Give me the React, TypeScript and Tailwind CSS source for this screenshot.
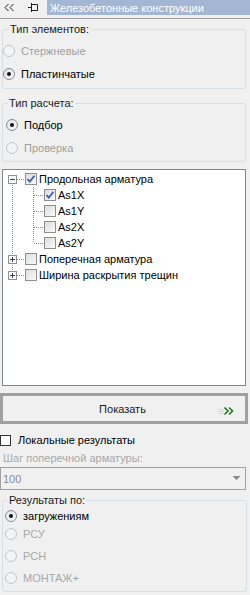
import React from 'react';

type RadioProps = {
  checked?: boolean
  disabled?: boolean
};

const Radio: React.FC<RadioProps> = ({ checked, disabled }: RadioProps) => (
  <span
    className={
      disabled
        ? 'flex h-[12px] w-[12px] shrink-0 items-center justify-center rounded-full border border-[#c4c4c4] bg-[#f4f4f4]'
        : 'flex h-[12px] w-[12px] shrink-0 items-center justify-center rounded-full border border-[#8a8a8a] bg-gradient-to-br from-[#e2e2e2] to-[#fbfbfb]'
    }
  >
    {checked && <span className="h-[4px] w-[4px] rounded-full bg-[#141414]" />}
  </span>
);

type CheckProps = {
  checked?: boolean
};

const TreeCheck: React.FC<CheckProps> = ({ checked }: CheckProps) => (
  <span className="flex h-[12px] w-[12px] shrink-0 items-center justify-center border border-[#8e8f8f] bg-gradient-to-br from-[#dcdcdc] to-[#fafafa]">
    {checked && (
      <svg width="10" height="10" viewBox="0 0 10 10">
        <path d="M1.5 5.2 L3.8 7.6 L8.5 1.8" fill="none" stroke="#3d5fb0" strokeWidth="1.8" />
      </svg>
    )}
  </span>
);

const Expander: React.FC<{ open?: boolean }> = ({ open }) => (
  <svg width="9" height="9" viewBox="0 0 9 9" className="shrink-0">
    <rect x="0.5" y="0.5" width="8" height="8" fill="#ffffff" stroke="#919191" />
    <path d="M2 4.5 H7" stroke="#1f3f7a" />
    {!open && <path d="M4.5 2 V7" stroke="#1f3f7a" />}
  </svg>
);

const App: React.FC = () => {
  return (
    <div className="flex h-[595px] w-[250px] flex-col overflow-hidden bg-[#f0f0f0] font-['Liberation_Sans',Arial,sans-serif] text-[11px] leading-[14px] text-black">
      {/* header */}
      <div className="flex h-[15px] items-center">
        <svg width="47" height="15" viewBox="0 0 47 15" className="shrink-0">
          <path d="M8.5 4 L5 7.5 L8.5 11 M13.5 4 L10 7.5 L13.5 11" fill="none" stroke="#202020" />
          <path d="M28 7.5 H31.5 M31.5 3 V12 M31.5 4.5 H37.5 V10.5 H31.5" fill="none" stroke="#202020" />
        </svg>
        <div className="flex h-[15px] flex-1 items-center bg-[#a3b6d3] pl-[3px] text-white">Железобетонные конструкции</div>
      </div>
      <div className="mt-[3px] h-px bg-[#a0a0a0]" />

      {/* тип элементов */}
      <fieldset className="ml-[2px] mt-[3px] h-[67px] w-[244px] rounded-[3px] border border-[#d5dfe5]">
        <legend className="ml-[6px] px-px text-[#1a1a1a]">Тип элементов:</legend>
        <div className="flex flex-col pt-[3px]">
          <div className="flex h-[23px] items-center text-[#a0a0a0]">
            <Radio disabled />
            <span className="ml-[6px]">Стержневые</span>
          </div>
          <div className="flex h-[23px] items-center">
            <Radio checked />
            <span className="ml-[6px]">Пластинчатые</span>
          </div>
        </div>
      </fieldset>

      {/* тип расчета */}
      <fieldset className="ml-[2px] mt-[7px] h-[66px] w-[244px] rounded-[3px] border border-[#d5dfe5]">
        <legend className="ml-[5px] px-px text-[#1a1a1a]">Тип расчета:</legend>
        <div className="flex flex-col pl-[3px] pt-[3px]">
          <div className="flex h-[23px] items-center">
            <Radio checked />
            <span className="ml-[6px]">Подбор</span>
          </div>
          <div className="flex h-[23px] items-center text-[#a0a0a0]">
            <Radio disabled />
            <span className="ml-[6px]">Проверка</span>
          </div>
        </div>
      </fieldset>

      {/* дерево */}
      <div className="relative ml-[2px] mt-[7px] h-[217px] w-[244px] border border-[#828790] bg-white pt-px">
        <svg width="60" height="110" className="absolute left-0 top-0" shapeRendering="crispEdges">
          <g stroke="#8c8c8c" strokeDasharray="1 1" fill="none">
            <path d="M9.5 9 V105" />
            <path d="M14 9.5 H22 M14 89.5 H22 M14 105.5 H22" />
            <path d="M30.5 17 V73" />
            <path d="M31 25.5 H41 M31 41.5 H41 M31 57.5 H41 M31 73.5 H41" />
          </g>
        </svg>
        <div className="relative flex flex-col">
          <div className="flex h-[16px] items-center pl-[5px]">
            <Expander open />
            <span className="ml-[8px]"><TreeCheck checked /></span>
            <span className="ml-[2px]">Продольная арматура</span>
          </div>
          {['As1X', 'As1Y', 'As2X', 'As2Y'].map((name, i) => (
            <div key={name} className="flex h-[16px] items-center pl-[41px]">
              <TreeCheck checked={i === 0} />
              <span className="ml-[2px]">{name}</span>
            </div>
          ))}
          <div className="flex h-[16px] items-center pl-[5px]">
            <Expander />
            <span className="ml-[8px]"><TreeCheck /></span>
            <span className="ml-[2px]">Поперечная арматура</span>
          </div>
          <div className="flex h-[16px] items-center pl-[5px]">
            <Expander />
            <span className="ml-[8px]"><TreeCheck /></span>
            <span className="ml-[2px]">Ширина раскрытия трещин</span>
          </div>
        </div>
      </div>

      {/* кнопка */}
      <button
        type="button"
        className="relative mt-[7px] flex h-[31px] w-[248px] items-center justify-center border-[3px] border-[#a0a0a0] bg-[#f0f0f0] text-[#1a1a1a]"
      >
        <span className="ml-[-3px]">Показать</span>
        <svg width="18" height="10" viewBox="0 0 18 10" className="absolute right-[9px] top-[10px]">
          <path d="M0 3.5 H6 M0 5.5 H6 M1 7.5 H6" stroke="#d8e08a" />
          <path d="M6.5 1.5 L10 5 L6.5 8.5 M11 1.5 L14.5 5 L11 8.5" fill="none" stroke="#1f7a22" strokeWidth="1.6" />
        </svg>
      </button>

      {/* локальные результаты */}
      <div className="mt-[8px] flex h-[16px] items-center">
        <span className="h-[11px] w-[11px] shrink-0 border border-[#333333] bg-white" />
        <span className="ml-[7px]">Локальные результаты</span>
      </div>
      <div className="ml-[3px] mt-[2px] flex h-[16px] items-center text-[#a8a8a8]">Шаг поперечной арматуры:</div>
      <div className="mt-px flex h-[23px] w-[246px] items-center justify-between border border-[#a0a0a0] bg-[#f0f0f0] pl-[2px] pr-[5px] text-[#8c8c8c]">
        <span>100</span>
        <svg width="7" height="5" viewBox="0 0 7 5">
          <path d="M0 0.5 H7 M1 1.5 H6 M2 2.5 H5 M3 3.5 H4" stroke="#8c8c8c" shapeRendering="crispEdges" />
        </svg>
      </div>

      {/* результаты по */}
      <fieldset className="ml-[2px] mt-[3px] h-[99px] w-[245px] rounded-[3px] border border-[#d5dfe5]">
        <legend className="ml-[5px] px-px text-[#1a1a1a]">Результаты по:</legend>
        <div className="flex flex-col pl-[2px]">
          <div className="flex h-[18px] items-center">
            <Radio checked />
            <span className="ml-[6px]">загружениям</span>
          </div>
          <div className="flex h-[18px] items-center text-[#a8a8a8]">
            <Radio disabled />
            <span className="ml-[6px]">РСУ</span>
          </div>
          <div className="mt-[4px] flex h-[18px] items-center text-[#a8a8a8]">
            <Radio disabled />
            <span className="ml-[6px]">РСН</span>
          </div>
          <div className="mt-[4px] flex h-[18px] items-center text-[#a8a8a8]">
            <Radio disabled />
            <span className="ml-[6px]">МОНТАЖ+</span>
          </div>
        </div>
      </fieldset>
    </div>
  );
};

export default App;
